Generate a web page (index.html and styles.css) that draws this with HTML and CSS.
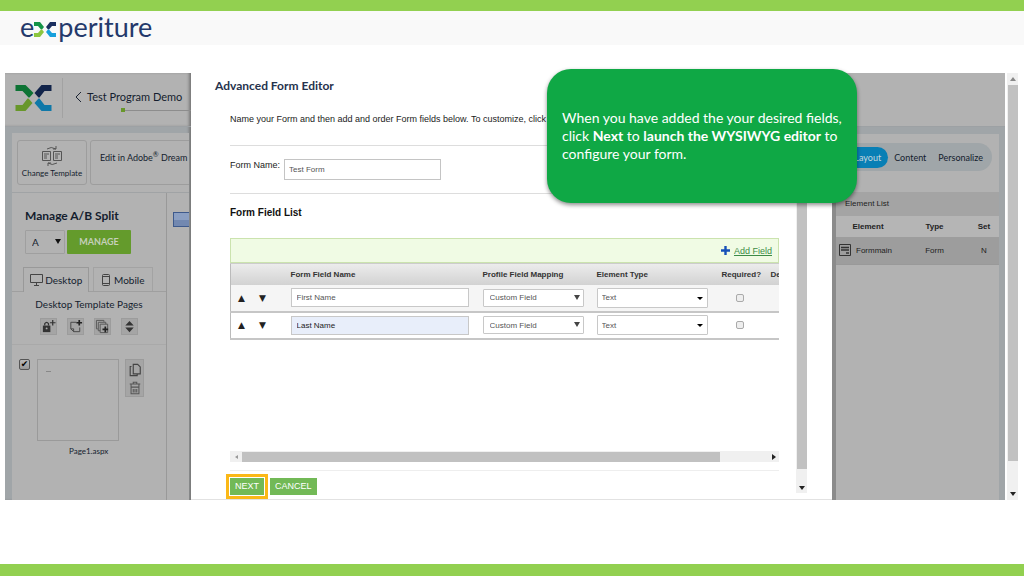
FILE: index.html
```html
<!DOCTYPE html>
<html lang="en">
<head>
<meta charset="utf-8">
<title>Experiture – Advanced Form Editor</title>
<link rel="stylesheet" href="styles.css">
</head>
<body>
<svg class="defs" aria-hidden="true">
  <symbol id="mark" viewBox="0 0 36 26">
    <path fill="var(--c1)" d="M0 0h10l8 8-4 4.500h-1L7 6H0z"/>
    <path fill="var(--c2)" d="M36 0H26l-7 8 4 4.500h1L29 6h7z"/>
    <path fill="var(--c3)" d="M0 26h10l7-8-4-4.500h-1L7 20H0z"/>
    <path fill="var(--c4)" d="M36 26H26l-7-8 4-4.500h1L29 20h7z"/>
  </symbol>
</svg>
<header class="brandbar">
  <div class="logo" aria-label="experiture">
    <span>e</span>
    <svg class="logo-x" viewBox="0 0 22 15" aria-hidden="true">
      <path fill="#149447" d="M0 0h6l4 5-2 2.500H7L4 4H0z"/><path fill="#1b2f5f" d="M22 0h-6l-4 5 2 2.500h1L18 4h4z"/>
      <path fill="#8cc63f" d="M0 15h6l4-5-2-2.500H7L4 11H0z"/><path fill="#18a0dc" d="M22 15h-6l-4-5 2-2.500h1L18 11h4z"/>
    </svg>
    <span>periture</span>
  </div>
</header>

<main class="stage">
  <section class="app-left">
    <div class="app-head">
      <svg class="mark"><use href="#mark"/></svg>
      <div class="program">
        <div class="program-name"><svg width="7" height="12" viewBox="0 0 7 12"><path d="M6 1 1 6l5 5" fill="none" stroke="#1b2433"/></svg><span>Test Program Demo</span></div>
        <div class="progress"></div>
      </div>
    </div>
    <div class="app-body">
      <div class="tools">
        <button class="tool change">
          <svg width="22" height="20" viewBox="0 0 22 20" fill="none" stroke="#555">
            <path d="M1.500 5.500h8v9h-8zM12.500 5.500h8v9h-8zM3 8h5M3 10h3M3 12h3M14 8h5M14 10h3M14 12h3M6 3Q10 0 15 3M15 0v3h-3M16 17q-5 3-9 0M7 20v-3h3"/></svg>
          <span>Change Template</span>
        </button>
        <button class="tool adobe">Edit in Adobe<sup>®</sup> Dream</button>
      </div>
      <div class="work">
        <aside class="side">
          <div class="split">
            <h2>Manage A/B Split</h2>
            <div class="split-row">
              <span class="pick ab"><select aria-label="Split version"><option>A</option></select></span>
              <button class="manage">MANAGE</button>
            </div>
          </div>
          <div class="tabs">
            <button class="tab on"><svg width="13" height="12" viewBox="0 0 13 12" fill="none" stroke="#444"><path d="M.5.500h12v8H.500zM4 11.500h5M6.500 9v2"/></svg>Desktop</button>
            <button class="tab"><svg width="8" height="12" viewBox="0 0 8 12" fill="none" stroke="#444"><rect x=".5" y=".5" width="7" height="11" rx="1"/><path d="M1 2.500h6M1 9.500h6"/></svg>Mobile</button>
          </div>
          <h3>Desktop Template Pages</h3>
          <div class="page-tools">
            <button aria-label="Lock page"><svg viewBox="0 0 16 16"><path fill="#333" d="M2 7h8v7H2z"/><path d="M4 7V5q2-3 4 0v2M12.500 1v6M9.500 4h6" fill="none" stroke="#333" stroke-width="1.300"/><circle cx="6" cy="10" r="1" fill="#aaa"/></svg></button>
            <button aria-label="Add page"><svg viewBox="0 0 16 16"><path d="M9 3.500H3v7l3 3h6.500V9M3 10.500h3v3" fill="none" stroke="#444"/><path d="M12 1v6M9 4h6" fill="none" stroke="#222" stroke-width="1.800"/></svg></button>
            <button aria-label="Copy page"><svg viewBox="0 0 16 16"><path d="M3 10.500H1.500v-9h8V3M5.500 12.500h-2v-9h8v2M5.500 5.500h8v9h-8z" fill="none" stroke="#555"/><path d="M11 8v6M8 11h6" stroke="#222" stroke-width="1.800"/></svg></button>
            <button aria-label="Sort pages"><svg viewBox="0 0 16 16"><path fill="#333" d="M8 2l4.500 5h-9zM8 14l4.500-5h-9z"/></svg></button>
          </div>
          <div class="page-item">
            <input type="checkbox" checked aria-label="Select Page1.aspx">
            <figure><div class="thumb"><i></i></div><figcaption>Page1.aspx</figcaption></figure>
            <div class="page-actions">
              <button aria-label="Duplicate"><svg viewBox="0 0 16 16" fill="none" stroke="#444" stroke-width="1.300"><path d="M6 1.500h5l3 3v8H6zM4 4H2.500v10.500h8V13"/></svg></button>
              <button aria-label="Delete"><svg viewBox="0 0 16 16" fill="none" stroke="#555" stroke-width="1.200"><path d="M2 3.500h12M6 3V1.500h4V3M3.500 4v10.500h9V4M3.500 7h9M6 9v4M8 9v4M10 9v4"/></svg></button>
            </div>
          </div>
        </aside>
        <div class="canvas"><div class="canvas-bar"></div></div>
      </div>
    </div>
  </section>

  <section class="dialog" role="dialog" aria-labelledby="dlg">
    <div class="dialog-main">
      <h1 id="dlg">Advanced Form Editor</h1>
      <div class="dialog-content">
        <p class="intro">Name your Form and then add and order Form fields below. To customize, click "Ne</p>
        <div class="name-row">
          <label for="fname">Form Name:</label>
          <input id="fname" type="text" value="Test Form">
        </div>
        <h2>Form Field List</h2>
        <div class="grid-wrap">
          <div class="add-bar"><svg width="9" height="9" viewBox="0 0 9 9"><path d="M4.500 0v9M0 4.500h9" stroke="#1650b8" stroke-width="2.400"/></svg><a href="#">Add Field</a></div>
          <table>
            <colgroup><col class="c-move"><col class="c-name"><col class="c-map"><col class="c-type"><col class="c-req"><col class="c-def"></colgroup>
            <thead><tr><th></th><th>Form Field Name</th><th>Profile Field Mapping</th><th>Element Type</th><th>Required?</th><th>De</th></tr></thead>
            <tbody>
              <tr>
                <td><span class="move"><button aria-label="Move up">▲</button><button aria-label="Move down">▼</button></span></td>
                <td><input type="text" value="First Name" aria-label="Field name"></td>
                <td><span class="pick map"><select aria-label="Mapping"><option>Custom Field</option></select></span></td>
                <td><span class="pick type"><select aria-label="Element type"><option>Text</option></select></span></td>
                <td><input type="checkbox" aria-label="Required"></td><td></td>
              </tr>
              <tr>
                <td><span class="move"><button aria-label="Move up">▲</button><button aria-label="Move down">▼</button></span></td>
                <td><input class="active" type="text" value="Last Name" aria-label="Field name"></td>
                <td><span class="pick map"><select aria-label="Mapping"><option>Custom Field</option></select></span></td>
                <td><span class="pick type"><select aria-label="Element type"><option>Text</option></select></span></td>
                <td><input type="checkbox" aria-label="Required"></td><td></td>
              </tr>
            </tbody>
          </table>
        </div>
        <div class="hscroll"><i class="arrow left"></i><div class="hthumb"></div><i class="arrow right"></i></div>
        <div class="actions"><button class="next">NEXT</button><button>CANCEL</button></div>
      </div>
    </div>
    <div class="vscroll inner"><div class="vthumb"></div><i class="arrow down"></i></div>
  </section>

  <section class="app-right">
    <div class="right-head"></div>
    <div class="right-body">
      <div class="modes"><nav><button class="on">Layout</button><button>Content</button><button>Personalize</button></nav></div>
      <h2>Element List</h2>
      <table>
        <thead><tr><th>Element</th><th>Type</th><th>Set</th></tr></thead>
        <tbody><tr><td><span class="el"><svg width="12" height="12" viewBox="0 0 12 12"><path d="M.5.500h11v11H.500z" fill="none" stroke="#333"/><path d="M2 3.500h8M2 6h8M7 9h3" stroke="#333" stroke-width="1.500"/></svg>Formmain</span></td><td>Form</td><td>N</td></tr></tbody>
      </table>
    </div>
  </section>
  <div class="vscroll outer"><i class="arrow up"></i><div class="vthumb"></div><i class="arrow down"></i></div>

  <div class="callout"><p>When you have added the your desired fields, click <b>Next</b> to <b>launch the WYSIWYG editor</b> to configure your form.</p></div>
</main>
</body>
</html>
```

FILE: styles.css
```css
* { box-sizing: border-box; }
body {
  margin: 0;
  min-height: 100vh;
  display: flex;
  flex-direction: column;
  border-top: 11px solid #92d050;
  border-bottom: 12px solid #92d050;
  background: #fff;
  font-family: Lato, sans-serif;
  color: #141d2e;
}
h1, h2, h3, p, figure { margin: 0; }
button, input, select { font: inherit; color: inherit; margin: 0; padding: 0; }
button { background: none; border: 0; white-space: nowrap; }
svg { flex: none; }
.defs { position: absolute; width: 0; height: 0; }

.brandbar { background: #f9f9f9; height: 34px; padding: 0 20px; }
.logo { display: flex; align-items: center; font-size: 27px; line-height: 32px; color: #24396b; }
.logo-x { width: 22px; height: 15px; margin: 4px 2px 0 0; }

.stage {
  position: relative;
  flex: 1;
  display: grid;
  grid-template-columns: 186px 1fr 173px 13px;
  margin: 28px 6px 64px 5px;
}

/* Dimmed application, left */
.app-left { display: flex; flex-direction: column; background: #a0a5a8; min-width: 0; overflow: hidden; box-shadow: inset -3px 0 3px -1px #777; }
.app-head { display: flex; align-items: center; height: 54px; padding: 0 0 3px 10px; background: #b2b2b2; border-bottom: 1px solid #9da1a4; box-shadow: inset -3px 0 3px -1px #777; }
.mark { width: 37px; height: 26px; --c1: #0d7334; --c2: #12244a; --c3: #68972a; --c4: #0f78a8; }
.program { flex: 1; height: 40px; margin-left: 10px; padding: 12px 0 0 12px; border-left: 1px solid #a2a2a2; font-size: 11px; line-height: 14px; }
.program-name { display: flex; align-items: center; gap: 5px; white-space: nowrap; }
.progress { height: 4px; margin: 4px 0 0 46px; border-left: 4px solid #68972a; background: linear-gradient(#8d8d8d, #8d8d8d) 0 2px / 100% 1px no-repeat; }
.app-body { flex: 1; display: flex; flex-direction: column; margin: 6px 2px 0 7px; background: #b2b2b2; }
.tools { display: flex; gap: 3px; height: 60px; padding: 7px 0 7px 5px; border-bottom: 1px solid #a0a3a5; overflow: hidden; }
.tool { flex: none; border: 1px solid #9d9d9d; border-radius: 3px; }
.change { width: 70px; display: flex; flex-direction: column; align-items: center; justify-content: center; gap: 1px; font-size: 8px; line-height: 12px; }
.adobe { width: 120px; padding: 0 0 11px 9px; text-align: left; font-size: 9px; }
.adobe sup { font-size: 7px; line-height: 0; }
.work { flex: 1; display: flex; }
.side { width: 155px; border-right: 1px solid #999; }
.split { padding: 15px 0 13px 13px; }
.split h2 { font-size: 12px; line-height: 16px; }
.split-row { display: flex; gap: 2px; margin-top: 6px; }
.manage { width: 64px; height: 24px; background: #649b2c; color: #c5cfba; font: bold 9px/24px Lato, sans-serif; border-radius: 1px; }
.pick { position: relative; display: block; }
.pick select { display: block; appearance: none; width: 100%; height: 100%; border: 1px solid #c8c8c8; border-radius: 1px; background: #fff; padding-left: 6px; }
.pick::after { content: ""; position: absolute; right: 4px; top: 50%; margin-top: -3px; border: 3px solid transparent; border-top: 5px solid #444; border-bottom: 0; pointer-events: none; }
.ab { width: 40px; height: 24px; font-size: 10px; }
.ab select { background: none; border-color: #9f9f9f; }
.ab::after { border-top-color: #111; }
.tabs { display: flex; gap: 4px; padding: 0 13px 0 11px; border-bottom: 1px solid #9f9f9f; }
.tab { height: 24px; display: flex; align-items: center; justify-content: center; gap: 4px; width: 60px; border: 1px solid #a3a3a3; border-bottom: 0; font-size: 10px; }
.tab.on { width: 67px; gap: 2px; margin-bottom: -1px; border-color: #999; background: #b2b2b2; height: 25px; }
.side h3 { font-size: 10px; font-weight: 400; line-height: 14px; margin-top: 5px; text-align: center; }
.page-tools { display: flex; gap: 10px; padding: 7px 0 9px 28px; border-bottom: 1px solid #a9a9a9; }
.page-tools button { width: 17px; height: 17px; background: #a5a5a5; border: 1px solid #9c9c9c; }
.page-tools svg { display: block; width: 15px; height: 15px; }
.page-item { display: flex; align-items: flex-start; padding: 14px 0 0 7px; }
.page-item input { appearance: none; width: 11px; height: 11px; border: 1px solid #555; border-radius: 2px; background: linear-gradient(#b8b8b8, #999); }
.page-item input:checked::after { content: "✔"; display: block; font: 9px/9px "DejaVu Sans", sans-serif; color: #000; text-align: center; }
.page-item figure { margin-left: 7px; font-size: 8px; line-height: 12px; }
.thumb { width: 82px; height: 82px; border: 1px solid #9a9a9a; padding: 11px 8px; }
.thumb i { display: block; width: 5px; height: 1px; background: #888; }
.page-item figcaption { padding: 4px 0 0 32px; }
.page-actions { display: flex; flex-direction: column; margin-left: 6px; width: 19px; background: #a5a5a5; border: 1px solid #9b9b9b; }
.page-actions button { height: 18px; padding-top: 1px; }
.page-actions svg { display: block; width: 14px; height: 14px; margin: 0 auto; }
.canvas { flex: 1; padding-top: 19px; }
.canvas-bar { margin-left: 6px; height: 15px; border: 1px solid #3e5a8c; border-right: 0; background: linear-gradient(#8b9fc2 50%, #7288b0 50%); }

/* Form editor dialog */
.dialog { display: flex; min-width: 0; background: #fff; border-bottom: 1px solid #e2e2e2; font-family: "Liberation Sans", Arial, sans-serif; }
.dialog-main { flex: 1; min-width: 0; padding: 5px 17px 0 24px; }
h1 { font: bold 12px/16px Lato, sans-serif; color: #26334d; }
.dialog-content { padding-left: 15px; font-size: 9px; color: #222; }
.intro { line-height: 12px; padding: 19px 0 20px; white-space: nowrap; overflow: hidden; border-bottom: 1px solid #ddd; }
.name-row { display: flex; gap: 4px; padding: 13px 0; border-bottom: 1px solid #ddd; }
.name-row label { line-height: 12px; }
.name-row input { width: 157px; height: 21px; border: 1px solid #c4c4c4; padding-left: 4px; font-size: 8px; color: #555; }
.dialog h2 { font-size: 10px; line-height: 14px; margin-top: 12px; color: #111; }
.grid-wrap { margin-top: 18px; overflow: hidden; height: 213px; font-size: 8px; }
.add-bar { display: flex; align-items: center; justify-content: flex-end; gap: 4px; height: 25px; padding-right: 6px; background: #f0fbe4; border: 1px solid #cbe3ae; font-size: 9px; }
.add-bar a { color: #3c8b46; }
.dialog table { table-layout: fixed; width: 640px; border-collapse: collapse; border-left: 1px solid #bbb; }
.c-move { width: 60px; }
.c-name { width: 192px; }
.c-map { width: 114px; }
.c-type { width: 125px; }
.c-req { width: 49px; }
.dialog th { height: 21px; padding: 0; text-align: left; color: #333; border-top: 1px solid #ccc; }
.dialog thead { background: linear-gradient(#ececec, #d2d2d2); }
.dialog tbody tr { height: 27px; border-bottom: 2px solid #c6c6c6; }
.dialog tbody tr:first-child { background: #f5f5f5; }
.dialog td { padding: 0; color: #555; }
.move { display: flex; gap: 10px; padding-left: 5px; }
.move button { width: 11px; font: 9px/12px "DejaVu Sans", sans-serif; color: #222; text-align: center; }
.dialog td input[type=text] { display: block; width: 178px; height: 19px; border: 1px solid #c8c8c8; padding-left: 5px; background: #fff; }
.dialog td input.active { background: #e8eefa; color: #222; }
.dialog td input[type=checkbox] { appearance: none; display: block; width: 8px; height: 8px; margin-left: 14px; border: 1px solid #aaa; border-radius: 2px; background: #eee; }
.map { width: 101px; height: 18px; }
.type { width: 111px; height: 20px; }
.type select { padding-left: 4px; }
.type::after { border-top-width: 3px; border-top-color: #000; margin-top: -1px; right: 5px; }
.hscroll { display: flex; align-items: center; justify-content: space-between; height: 11px; padding: 0 3px 0 5px; background: #f0f0f0; }
.hthumb { width: 478px; height: 10px; margin: 0 auto 0 4px; background: #c1c1c1; }
.arrow { display: block; border: 3px solid transparent; width: 0; height: 0; }
.left { border-left: 0; border-right: 4px solid #999; border-width: 2px 3px 2px 0; }
.right { border-left: 4px solid #222; border-right: 0; }
.down { border-top: 4px solid #222; border-bottom: 0; }
.up { border-bottom: 4px solid #888; border-top: 0; }
.actions { display: flex; gap: 6px; margin-top: 8px; padding-top: 7px; border-top: 1px solid #eee; }
.actions button { height: 17px; padding: 0 5px; background: #72b956; color: #fff; font-size: 9px; line-height: 17px; }
.actions .next { outline: 3px solid #fbb817; outline-offset: 1px; }
.vscroll { display: flex; flex-direction: column; align-items: center; background: #f0f0f0; }
.vthumb { flex: 1; background: #c1c1c1; width: 10px; }
.inner { width: 11px; margin: 0 25px 6px 0; padding-bottom: 3px; }
.inner .down { margin-top: 17px; }

/* Dimmed application, right */
.app-right { display: flex; flex-direction: column; background: #a0a5a8; border-left: 4px solid #8b8b8b; font-size: 8px; }
.right-head { height: 54px; background: #b2b2b2; border-bottom: 1px solid #9da1a4; }
.right-body { flex: 1; margin: 7px 6px 0 0; background: #b2b2b2; }
.modes { padding: 9px 7px 21px 0; height: 58px; }
.modes nav { display: flex; align-items: center; justify-content: flex-end; height: 28px; padding-right: 3px; background: #a0a6a9; border-radius: 14px; font-size: 9px; }
.modes button { padding: 0 7px; height: 21px; }
.modes button + button { padding: 0 6px; }
.modes .on { background: #087fb5; color: #c5d7df; border-radius: 11px; }
.right-body h2 { font: 8px/24px "Liberation Sans", Arial, sans-serif; padding-left: 9px; background: #a4a4a4; color: #222; }
.app-right table { width: 100%; border-collapse: collapse; table-layout: fixed; font-family: "Liberation Sans", Arial, sans-serif; text-align: center; }
.app-right th, .app-right td { padding: 0; color: #222; }
.app-right th { height: 21px; font-size: 8px; background: #b5b5b5; }
.app-right td { height: 27px; background: #9d9d9d; border-bottom: 1px solid #999; }
.app-right th:first-child { width: 64px; }
.app-right th:last-child { width: 30px; }
.el { display: flex; align-items: center; gap: 5px; padding-left: 3px; }
.outer { margin-left: 2px; padding: 4px 0; gap: 4px; }
.outer .down { margin-top: 27px; }

.callout {
  position: absolute;
  left: 542px;
  top: -4px;
  width: 310px;
  height: 134px;
  display: flex;
  align-items: center;
  padding: 0 12px 0 15px;
  border-radius: 24px;
  background: #0fa845;
  box-shadow: 0 2px 4px rgba(0, 0, 0, .45);
  color: #fff;
  font-size: 14px;
  line-height: 18px;
}
```
